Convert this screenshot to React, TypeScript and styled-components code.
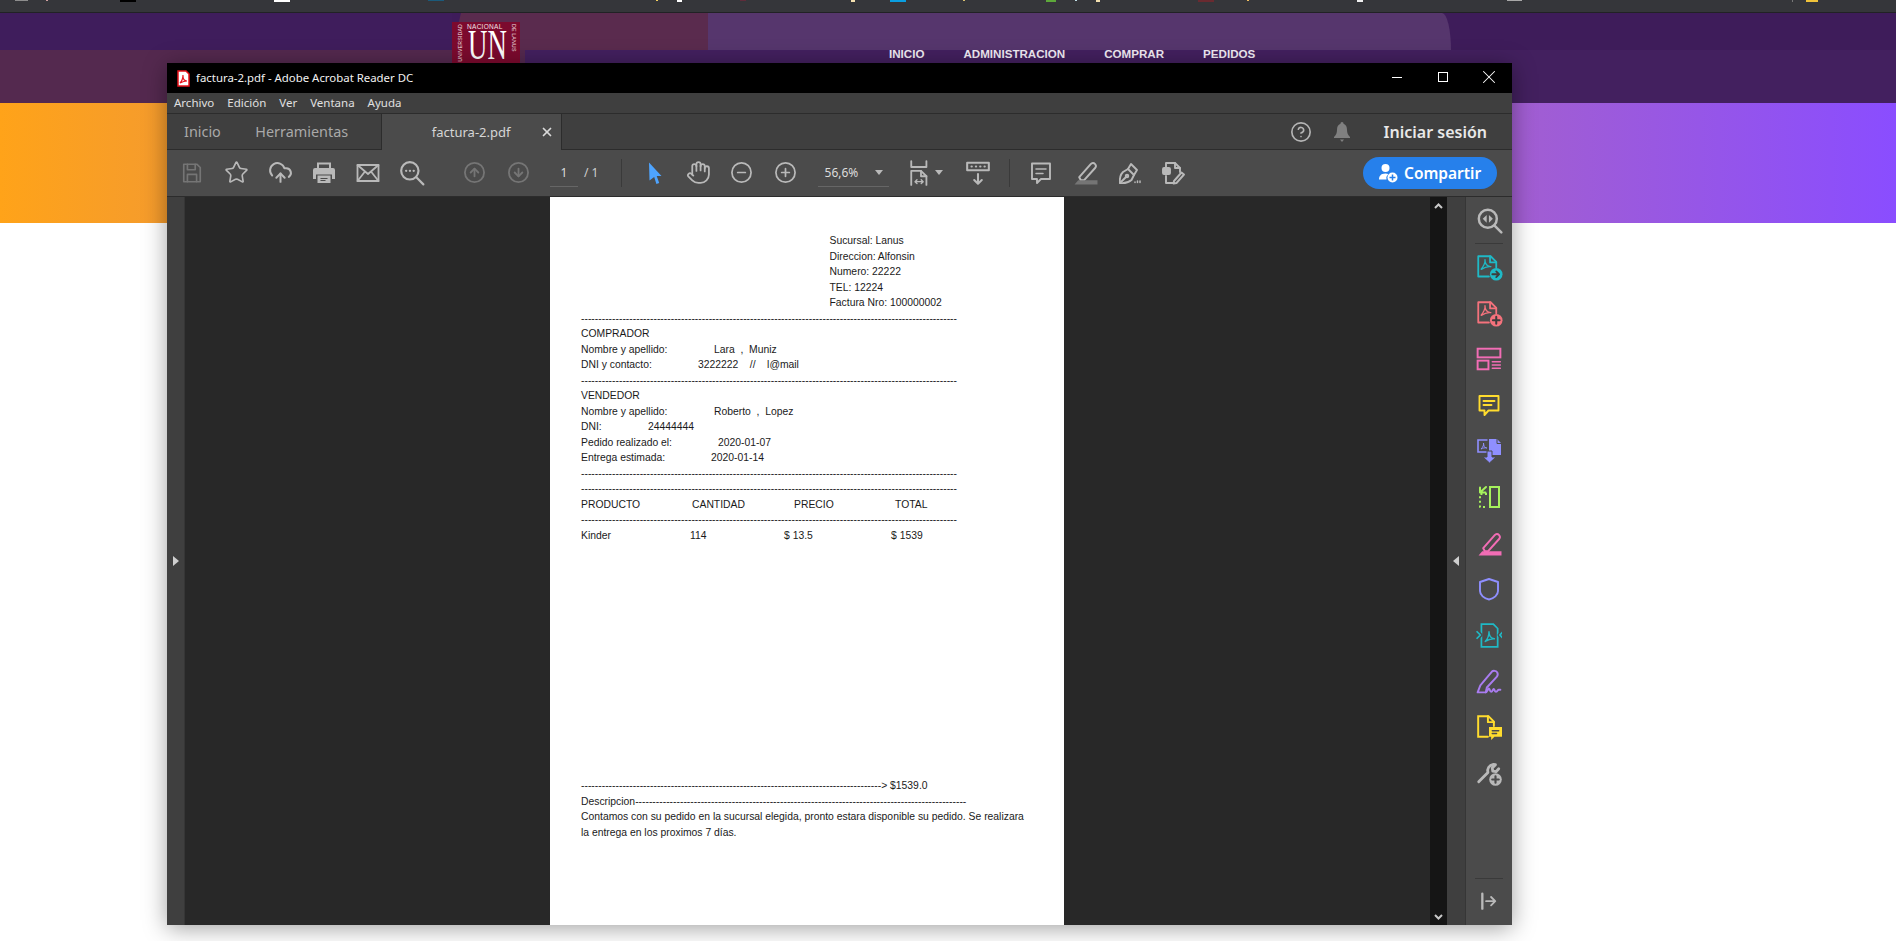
import React from 'react';
import styled, {createGlobalStyle} from 'styled-components';
import {Star, CloudUpload, CircleArrowUp, CircleArrowDown, Hand, CircleMinus, CirclePlus, CircleHelp, X} from 'lucide-react';

const UI_FONT = `'Noto Sans', 'Open Sans', sans-serif`;

const GlobalStyle = createGlobalStyle`
    html, body {
        margin: 0;
        height: 100%;
        overflow: hidden;
        background: #fff;
    }
    * {
        box-sizing: border-box;
    }
`;

const Desktop = styled.div`
    position: relative;
    width: 1896px;
    height: 941px;
    overflow: hidden;
    background: #fff;
`;

/* browser chrome, almost entirely cut off by the capture */
const BrowserStrip = styled.div`
    display: flex;
    align-items: flex-start;
    height: 13px;
    background: #35363a;
    border-bottom: 1px solid #212225;
`;

const Tick = styled.span<{$gap: number; $w: number; $h: number; $c: string}>`
    display: block;
    flex: none;
    margin-left: ${p => p.$gap}px;
    width: ${p => p.$w}px;
    height: ${p => p.$h}px;
    background: ${p => p.$c};
`;

const BandTop = styled.div`
    display: flex;
    height: 37px;
    background: #3e1c5a;
`;

const Segment = styled.div<{$w: number; $c: string}>`
    flex: none;
    width: ${p => p.$w}px;
    background: ${p => p.$c};
`;

const SlantSegment = styled(Segment)`
    clip-path: polygon(9px 0, 100% 0, 100% 100%, 0 100%);
`;

const CurvedSegment = styled(Segment)`
    border-top-right-radius: 9px 37px;
`;

const BandBottom = styled.div`
    display: flex;
    height: 53px;
    background: #43205f;
`;

const NavList = styled.nav`
    display: flex;
    gap: 39px;
    margin-top: -3px;
    padding: 0 0 0 364px;
    height: 12px;
    align-items: center;
`;

const NavLink = styled.span`
    font: bold 11.6px 'Liberation Sans', sans-serif;
    color: #f2ecf5;
`;

const Hero = styled.div`
    height: 120px;
    background: linear-gradient(90deg, #ffa319 0%, #8a4dff 100%);
`;

const Logo = styled.div`
    position: absolute;
    left: 452px;
    top: 22px;
    width: 68px;
    height: 41px;
    background: #7c0a2e;
    color: #f3e3e6;
`;

const LogoTop = styled.span`
    position: absolute;
    left: 15px;
    top: 1px;
    font: 6.5px/7px 'Liberation Sans', sans-serif;
    letter-spacing: 0.3px;
`;

const LogoSide = styled.span<{$left: number; $up?: boolean}>`
    position: absolute;
    left: ${p => p.$left}px;
    top: 2px;
    writing-mode: vertical-rl;
    font: 5.2px/8px 'Liberation Sans', sans-serif;
    letter-spacing: 0.2px;
    white-space: nowrap;
    transform: ${p => (p.$up ? 'rotate(180deg)' : 'none')};
`;

const LogoMark = styled.span`
    position: absolute;
    left: 16px;
    top: 9px;
    font: 42px/28px 'Liberation Serif', serif;
    transform: scaleX(0.64);
    transform-origin: left top;
    color: #fff;
`;

/* the reader window floats over the page */
const ReaderWindow = styled.div`
    position: absolute;
    left: 167px;
    top: 63px;
    width: 1345px;
    height: 862px;
    display: flex;
    flex-direction: column;
    overflow: hidden;
    font-family: ${UI_FONT};
    background: #3f3f3f;
    box-shadow: 0 3px 22px rgba(0, 0, 0, 0.38);
`;

const TitleBar = styled.div`
    display: flex;
    align-items: center;
    flex: none;
    height: 30px;
    padding-left: 10px;
    background: #000;
    color: #f2f2f2;
`;

const TitleText = styled.span`
    margin: -2px 0 0 6px;
    font-size: 11.4px;
`;

const WindowControls = styled.div`
    display: flex;
    margin-left: auto;
`;

const WindowButton = styled.div`
    display: flex;
    align-items: center;
    justify-content: center;
    width: 46px;
    height: 30px;
    padding-bottom: 2px;
    color: #fff;
`;

const MinimizeMark = styled.span`
    width: 10px;
    height: 1px;
    background: #fff;
`;

const MaximizeMark = styled.span`
    width: 10px;
    height: 10px;
    border: 1px solid #fff;
`;

const MenuBar = styled.div`
    display: flex;
    align-items: center;
    flex: none;
    gap: 13px;
    height: 21px;
    padding: 0 0 1px 7px;
    border-bottom: 1px solid #2c2c2c;
    font-size: 11.5px;
    color: #e0e0e0;
`;

const TabBar = styled.div`
    display: flex;
    align-items: stretch;
    flex: none;
    height: 36px;
    border-bottom: 1px solid #2c2c2c;
`;

const Tab = styled.div`
    display: flex;
    align-items: center;
    padding: 0 17.5px 0 17px;
    font-size: 14.4px;
    color: #a9a9a9;
`;

const ActiveTab = styled.div`
    position: relative;
    display: flex;
    align-items: center;
    justify-content: center;
    width: 181px;
    height: 36px;
    margin-left: 15px;
    background: #4b4b4b;
    border-left: 1px solid #2c2c2c;
    border-right: 1px solid #2c2c2c;
    font-size: 13px;
    color: #d6d6d6;
`;

const TabClose = styled.span`
    position: absolute;
    right: 7px;
    top: 11px;
    display: flex;
    color: #d9d9d9;
`;

const TabActions = styled.div`
    display: flex;
    align-items: center;
    margin-left: auto;
    padding-right: 25px;
    color: #b5b5b5;
`;

const BellSlot = styled.span`
    display: flex;
    margin-left: 22px;
    color: #808080;
`;

const SignIn = styled.span`
    margin-left: 34px;
    font-size: 16px;
    font-weight: 600;
    color: #e8e8e8;
`;

const Toolbar = styled.div`
    display: flex;
    align-items: center;
    flex: none;
    height: 47px;
    padding: 0 15px 1px 3px;
    background: #4b4b4b;
    border-bottom: 1px solid #2c2c2c;
`;

const ToolButton = styled.div<{$tone?: string; $left?: number; $w?: number}>`
    display: flex;
    align-items: center;
    justify-content: center;
    flex: none;
    width: ${p => p.$w ?? 44}px;
    height: 32px;
    margin-left: ${p => p.$left ?? 0}px;
    color: ${p => p.$tone ?? '#b9b9b9'};
`;

const ToolDivider = styled.div<{$left: number}>`
    flex: none;
    width: 1px;
    height: 28px;
    margin-left: ${p => p.$left}px;
    background: #3a3a3a;
`;

const Underlined = styled.div<{$left: number; $w: number}>`
    display: flex;
    align-items: center;
    justify-content: center;
    flex: none;
    width: ${p => p.$w}px;
    height: 28px;
    margin-left: ${p => p.$left}px;
    border-bottom: 1px solid #666;
    font-size: 12px;
    color: #dcdcdc;
`;

const PageTotal = styled.span`
    margin-left: 6px;
    font-size: 12px;
    color: #cfcfcf;
`;

const Caret = styled.span<{$left: number}>`
    flex: none;
    margin-left: ${p => p.$left}px;
    width: 0;
    height: 0;
    border-style: solid;
    border-width: 5px 4px 0 4px;
    border-color: #b9b9b9 transparent transparent transparent;
`;

const ShareButton = styled.div`
    display: flex;
    align-items: center;
    margin-left: auto;
    width: 134px;
    height: 32px;
    padding-left: 15px;
    gap: 6px;
    border-radius: 16px;
    background: #2680eb;
    font-size: 15.5px;
    font-weight: 600;
    color: #fff;
`;

const Workspace = styled.div`
    display: flex;
    flex: 1;
    min-height: 0;
`;

const Gutter = styled.div<{$w: number}>`
    display: flex;
    align-items: center;
    justify-content: center;
    flex: none;
    width: ${p => p.$w}px;
    background: #3f3f3f;
    border-right: 1px solid #363636;
`;

const GutterArrow = styled.span<{$dir: 'left' | 'right'}>`
    width: 0;
    height: 0;
    border-style: solid;
    border-width: ${p => (p.$dir === 'right' ? '5px 0 5px 6px' : '5px 6px 5px 0')};
    border-color: ${p =>
        p.$dir === 'right'
            ? 'transparent transparent transparent #cfcfcf'
            : 'transparent #cfcfcf transparent transparent'};
`;

const DocArea = styled.div`
    flex: 1;
    min-width: 0;
    padding-left: 365px;
    background: #282828;
    overflow: hidden;
`;

const Page = styled.div`
    width: 514px;
    height: 100%;
    padding: 36px 0 0 31px;
    background: #fff;
    font: 10.37px/15.5px 'Liberation Sans', Arial, sans-serif;
    color: #1a1a1a;
    white-space: pre;
`;

const BranchBlock = styled.div`
    padding-left: 248.5px;
`;

const Line = styled.div`
    display: flex;
    height: 15.5px;
`;

const Cell = styled.span<{$w: number}>`
    flex: none;
    width: ${p => p.$w}px;
`;

const PageFooter = styled.div`
    margin-top: 235px;
`;

const Description = styled.div`
    width: 451px;
    white-space: normal;
`;

const Scrollbar = styled.div`
    display: flex;
    flex-direction: column;
    align-items: center;
    justify-content: space-between;
    flex: none;
    width: 17px;
    padding: 6px 0 5px;
    background: #151515;
    color: #c8c8c8;
`;

const ToolRail = styled.div`
    display: flex;
    flex-direction: column;
    align-items: center;
    flex: none;
    width: 46px;
    background: #4b4b4b;
`;

const RailButton = styled.div<{$tone: string}>`
    display: flex;
    align-items: center;
    justify-content: center;
    flex: none;
    width: 46px;
    height: 46px;
    color: ${p => p.$tone};
`;

const RailRule = styled.div`
    flex: none;
    width: 28px;
    height: 1px;
    background: #3a3a3a;
`;

const RailSpacer = styled.div`
    flex: 1;
`;

type IconProps = {children: React.ReactNode; size?: number; stroke?: number};

const Glyph = ({children, size = 24, stroke = 2}: IconProps) => (
    <svg
        width={size}
        height={size}
        viewBox="0 0 24 24"
        fill="none"
        stroke="currentColor"
        strokeWidth={stroke}
        strokeLinejoin="round"
        strokeLinecap="round"
    >
        {children}
    </svg>
);

const PDF_MARK = 'M7 16c2-2 4-6 3.5-8.5M10.5 7.5c0 4 2 6 5 6.5M7 16.5c3-2 6-3 9-2.5';

const PdfFileIcon = () => (
    <svg width="13" height="17" viewBox="0 0 13 17">
        <path d="M1 1h8l3 3v12H1z" fill="#fff" stroke="#e8141c" strokeWidth="1.5" />
        <path d="M3 13c2-2 3-5 3-8M6 6c0 3 1 5 4 5M3 13c2-1 5-2 7-2" fill="none" stroke="#e8141c" strokeWidth="1.2" />
    </svg>
);

const SaveIcon = () => (
    <Glyph size={22} stroke={1.8}>
        <path d="M3 2.5h14.5L21 6v15.5H3z" />
        <path d="M7 2.5v6h8.5v-6M7 21.5v-8h10v8" />
    </Glyph>
);

const PrinterIcon = () => (
    <svg width="24" height="24" viewBox="0 0 24 24">
        <path d="M6 7V2.5h12V7" fill="none" stroke="currentColor" strokeWidth="2" />
        <path d="M3 7h18a2 2 0 0 1 2 2v9h-3v-4.5H4V18H1V9a2 2 0 0 1 2-2z" fill="currentColor" />
        <rect x="5.5" y="14.5" width="13" height="7.5" fill="currentColor" />
        <path d="M8.5 17.5h7M8.5 19.5h5" stroke="#4b4b4b" strokeWidth="1.2" />
    </svg>
);

const MailIcon = () => (
    <Glyph size={24} stroke={1.8}>
        <rect x="1.5" y="4" width="21" height="16" />
        <path d="M1.5 4 12 13 22.5 4M1.5 20 9 10.5M22.5 20 15 10.5" />
    </Glyph>
);

const SearchDotsIcon = () => (
    <Glyph size={26} stroke={2}>
        <circle cx="10" cy="10" r="8" />
        <path d="m16 16 6.5 6.5" />
        <path d="M6.5 10h.2M10 10h.2M13.5 10h.2" />
    </Glyph>
);

const PointerIcon = () => (
    <svg width="20" height="24" viewBox="0 0 20 24">
        <path d="M4 1.5 16.5 15h-4.8l2.5 7-2.8 1-2.2-7-4.700 3.500z" fill="#4ea4ff" />
    </svg>
);

const FitPageIcon = () => (
    <Glyph size={26} stroke={1.7}>
        <path d="M3 1v5.5h14V1" />
        <path d="M3 23V10h9l5 5v8" />
        <path d="M12 10v5h5" />
        <path d="M6.5 20H14M6.5 20l1.8-1.8M6.5 20l1.8 1.8M14 20l-1.8-1.8M14 20l-1.8 1.8" strokeWidth="1.3" />
    </Glyph>
);

const MeasureIcon = () => (
    <Glyph size={26} stroke={1.9}>
        <rect x="2" y="2.5" width="20" height="7" />
        <path d="M6 6h.3M10 6h.3M14 6h.3M18 6h.3" />
        <path d="M12 13v9M8.5 18.5 12 22l3.5-3.5" />
    </Glyph>
);

const CommentIcon = () => (
    <Glyph size={24} stroke={1.9}>
        <path d="M3 2.5h18V18h-9l-4 4v-4H3z" />
        <path d="M7 8h10M7 12.5h7" strokeWidth="1.5" />
    </Glyph>
);

const HighlightIcon = ({tone = '#757575'}: {tone?: string}) => (
    <Glyph size={25} stroke={1.9}>
        <path d="M6 16.5 17 4c1.2-1.3 3-1.3 4-.3s1.3 2.7.2 4L10.5 19.5h-3z" />
        <path d="M1.5 23.5 5 19.5h18.5v4z" fill={tone} stroke="none" />
    </Glyph>
);

const PenNibIcon = () => (
    <Glyph size={24} stroke={1.9}>
        <path d="M3 22c-.5-4 0-8 3-11l5-3 6 6-2.5 5c-3 2.5-7.5 3.5-11.5 3z" />
        <path d="m11 8 3-5 6 6-3 5M3 22l6-6" />
        <circle cx="10" cy="15" r="1.3" />
        <path d="M18 21v.5M20.5 20v1.5M23 20v1.5" strokeWidth="1.5" />
    </Glyph>
);

const EditDocIcon = () => (
    <Glyph size={24} stroke={1.9}>
        <path d="M5 7V2h9l5 5v4" />
        <path d="M14 2v5h5" />
        <rect x="2" y="7" width="7" height="6" rx="1" fill="currentColor" />
        <path d="M5 15v7h7" />
        <path d="m13 20 7.5-8.5 2.500 2L15.5 22l-3 .5z" />
    </Glyph>
);

const BellIcon = () => (
    <svg width="16" height="20" viewBox="0 0 16 20">
        <path d="M8 0c1 0 1.5.8 1.5 1.8C12 2.6 13 5 13 8c0 3 1 5 3 7v1H0v-1c2-2 3-4 3-7 0-3 1-5.4 3.5-6.2C6.5.8 7 0 8 0z" fill="currentColor" />
        <path d="M6 17.5h4L8 20z" fill="currentColor" />
    </svg>
);

const ShareUserIcon = () => (
    <svg width="20" height="20" viewBox="0 0 20 20" fill="#fff">
        <circle cx="7.5" cy="5" r="4" />
        <path d="M1 16.5c0-3 1.5-6 6.5-6 1 0 2 .2 2.8.5a6 6 0 0 0-1.8 5.5z" />
        <circle cx="14.5" cy="14.5" r="5" />
        <path d="M14.5 11.5v6M11.5 14.5h6" stroke="#2680eb" strokeWidth="1.5" />
    </svg>
);

const SearchCodeIcon = () => (
    <Glyph size={27} stroke={2.2}>
        <circle cx="10.5" cy="10.5" r="8" />
        <path d="m16.5 16.5 6 6" />
        <path d="M9.5 7v7L6 10.5zM11.5 7v7l3.5-3.5z" fill="currentColor" stroke="none" />
    </Glyph>
);

const PdfBadgeIcon = ({kind}: {kind: 'export' | 'create'}) => (
    <Glyph size={27} stroke={1.6}>
        <path d="M11.5 20H2V2h11l5 5v5" />
        <path d="M12.5 2v5.5H18" />
        <path d={PDF_MARK} transform="translate(-2 -2) scale(.95)" strokeWidth="1.2" />
        <circle cx="18" cy="18" r="5.6" fill="currentColor" stroke="none" />
        {kind === 'export' ? (
            <path d="M14.5 18h6M18 15.5l2.5 2.5-2.5 2.5" stroke="#3c3c3c" />
        ) : (
            <path d="M15 18h6M18 15v6" stroke="#3c3c3c" strokeWidth="1.8" />
        )}
    </Glyph>
);

const LayoutIcon = () => (
    <Glyph size={26} stroke={1.8}>
        <rect x="1.5" y="2.5" width="21" height="8" strokeLinejoin="miter" />
        <rect x="1.5" y="13.5" width="10" height="8" strokeLinejoin="miter" />
        <path d="M15 14.5h7.5M15 17.5h7.5M15 20.5h7.5" strokeWidth="1.3" />
    </Glyph>
);

const BubbleIcon = () => (
    <Glyph size={24} stroke={1.9}>
        <path d="M2.5 3h19v14.5h-10L7.5 22v-4.500h-5z" />
        <path d="M6.5 8h11M6.5 12h8" />
    </Glyph>
);

const CombineIcon = () => (
    <svg width="26" height="26" viewBox="0 0 26 26" fill="none" stroke="currentColor" strokeWidth="1.6">
        <path d="M11 14H2V2h9.5" />
        <path d="M5 11c2-2 3-4 2.5-6M7.5 5c0 3 1 4.5 3 5M5 11c2-1 3.5-1.5 6-1" strokeWidth="1" />
        <path d="M13 1h8l4 4v12H13z" fill="currentColor" stroke="none" />
        <path d="M21 .5v5h4.5" stroke="#4b4b4b" strokeWidth="1" />
        <path d="M11 13h5v6h4l-6.5 6L7 19h4z" fill="currentColor" stroke="#4b4b4b" strokeWidth="1" />
    </svg>
);

const OrganizeIcon = () => (
    <Glyph size={24} stroke={2}>
        <rect x="13" y="2" width="9" height="20" strokeLinejoin="miter" />
        <path d="M10 9H3v13h7" strokeDasharray="2 2.6" strokeLinecap="butt" />
        <path d="M9 2 3.5 7M3 2.5v5h5.5" />
    </Glyph>
);

const ShieldIcon = () => (
    <Glyph size={24} stroke={1.9}>
        <path d="M12 2 21 5v9c0 4-4 7.5-9 8.5-5-1-9-4.5-9-8.5V5z" />
    </Glyph>
);

const CompressIcon = () => (
    <Glyph size={26} stroke={1.6}>
        <path d="M5 2h11l4 4v17H5z" strokeLinejoin="miter" />
        <path d="M8.5 18c2-2 3.5-5 3.5-9M12 9c0 4 1.5 6 5 6.5M8.5 18c3-2 5-3 8.5-2.5" strokeWidth="1.3" />
        <path d="M1 9l3 3-3 3M25 9l-3 3 3 3" stroke="#4b4b4b" strokeWidth="4" />
        <path d="M1 9l3 3-3 3M25 9l-3 3 3 3" />
    </Glyph>
);

const SignIcon = () => (
    <Glyph size={26} stroke={1.8}>
        <path d="M1.5 22.5 4 16 14.5 3.5c1.5-1.5 4-1 5 .5s.6 2.8-.2 4L10 18l-1 4.5z" />
        <path d="M9 22.5c1.5 0 2-4 3-3.5s.5 3 2 3 1.5-3 2.5-2.5.5 2.5 2 2.5 1.5-2 2.5-2h1.5" />
    </Glyph>
);

const DocCommentIcon = () => (
    <Glyph size={26} stroke={1.8}>
        <path d="M11 21H2V2h9.5l5 5v4" strokeLinejoin="miter" />
        <path d="M11 2v5.5h5.5" />
        <path d="M12 12h12v9h-7l-3 3v-3h-2z" fill="currentColor" stroke="none" />
        <path d="M15 15.5h6M15 18h4" stroke="#4b4b4b" strokeWidth="1.3" />
    </Glyph>
);

const WrenchPlusIcon = () => (
    <Glyph size={26} stroke={2.6}>
        <path d="M2.5 20 11 11.5c-1-3 1-7 5-7.5l2 .3-3 3 .5 3 3 .5 2.5-2.7" />
        <circle cx="18" cy="18" r="5.8" fill="currentColor" stroke="none" />
        <path d="M15 18h6M18 15v6" stroke="#4b4b4b" strokeWidth="2" />
    </Glyph>
);

const CollapseIcon = () => (
    <Glyph size={20} stroke={2.2}>
        <path d="M4 2v18" strokeWidth="2.8" />
        <path d="M8.5 11H19M14.5 6l5 5-5 5" />
    </Glyph>
);

const ChevronUp = () => (
    <svg width="9" height="6" viewBox="0 0 9 6" fill="none" stroke="currentColor" strokeWidth="2">
        <path d="m1 5 3.5-3.5L8 5" />
    </svg>
);

const ChevronDown = () => (
    <svg width="9" height="6" viewBox="0 0 9 6" fill="none" stroke="currentColor" strokeWidth="2">
        <path d="m1 1 3.5 3.5L8 1" />
    </svg>
);

// gap from the previous mark, width, height, colour
const STRIP_MARKS: [number, number, number, string][] = [
    [15, 13, 1, '#8d8d8d'],
    [18, 2, 1, '#d0a0a0'],
    [72, 16, 2, '#000'],
    [138, 16, 2, '#fff'],
    [138, 16, 1, '#1b5a7a'],
    [212, 2, 1, '#f2d060'],
    [19, 5, 2, '#fff'],
    [58, 6, 1, '#5f2c3a'],
    [105, 4, 2, '#f4e0b0'],
    [35, 16, 2, '#0a9ee0'],
    [57, 2, 1, '#d8c070'],
    [81, 10, 2, '#5da83a'],
    [19, 2, 1, '#c0e0e8'],
    [19, 4, 2, '#f4e0b0'],
    [98, 16, 2, '#6a2a30'],
    [33, 2, 1, '#f2c060'],
    [108, 6, 2, '#f0f0f0'],
    [144, 15, 1, '#a8a8a8'],
    [270, 1, 2, '#777'],
    [13, 12, 2, '#efc23a']
];

const RIGHT_TOOLS: [string, React.ReactNode][] = [
    ['#1fb9c6', <PdfBadgeIcon key="a" kind="export" />],
    ['#f4727c', <PdfBadgeIcon key="b" kind="create" />],
    ['#f26db5', <LayoutIcon key="c" />],
    ['#ffdc2e', <BubbleIcon key="d" />],
    ['#8f8fff', <CombineIcon key="e" />],
    ['#a6f25c', <OrganizeIcon key="f" />],
    ['#f26db5', <HighlightIcon key="g" tone="#f26db5" />],
    ['#8f8fff', <ShieldIcon key="h" />],
    ['#1fb9c6', <CompressIcon key="i" />],
    ['#a97cf0', <SignIcon key="j" />],
    ['#ffdc2e', <DocCommentIcon key="k" />],
    ['#b9b9b9', <WrenchPlusIcon key="l" />]
];

const DASHES = '-'.repeat(109);

const App = (): JSX.Element => {
    return (
        <Desktop>
            <GlobalStyle />
            <BrowserStrip>
                {STRIP_MARKS.map(([gap, w, h, c], i) => (
                    <Tick key={i} $gap={gap} $w={w} $h={h} $c={c} />
                ))}
            </BrowserStrip>
            <BandTop>
                <Segment $w={452} $c="#3f1d5c" />
                <SlantSegment $w={256} $c="#5a2b4e" />
                <CurvedSegment $w={743} $c="#56366d" />
            </BandTop>
            <BandBottom>
                <Segment $w={525} $c="#54294f" />
                <NavList>
                    <NavLink>INICIO</NavLink>
                    <NavLink>ADMINISTRACION</NavLink>
                    <NavLink>COMPRAR</NavLink>
                    <NavLink>PEDIDOS</NavLink>
                </NavList>
            </BandBottom>
            <Hero />
            <Logo>
                <LogoTop>NACIONAL</LogoTop>
                <LogoSide $left={4} $up>UNIVERSIDAD</LogoSide>
                <LogoSide $left={58}>DE LANUS</LogoSide>
                <LogoMark>UN</LogoMark>
            </Logo>

            <ReaderWindow>
                <TitleBar>
                    <PdfFileIcon />
                    <TitleText>factura-2.pdf - Adobe Acrobat Reader DC</TitleText>
                    <WindowControls>
                        <WindowButton>
                            <MinimizeMark />
                        </WindowButton>
                        <WindowButton>
                            <MaximizeMark />
                        </WindowButton>
                        <WindowButton>
                            <X size={22} strokeWidth={1.1} />
                        </WindowButton>
                    </WindowControls>
                </TitleBar>
                <MenuBar>
                    <span>Archivo</span>
                    <span>Edición</span>
                    <span>Ver</span>
                    <span>Ventana</span>
                    <span>Ayuda</span>
                </MenuBar>
                <TabBar>
                    <Tab>Inicio</Tab>
                    <Tab>Herramientas</Tab>
                    <ActiveTab>
                        factura-2.pdf
                        <TabClose>
                            <X size={14} strokeWidth={3} />
                        </TabClose>
                    </ActiveTab>
                    <TabActions>
                        <CircleHelp size={22} strokeWidth={1.8} />
                        <BellSlot>
                            <BellIcon />
                        </BellSlot>
                        <SignIn>Iniciar sesión</SignIn>
                    </TabActions>
                </TabBar>
                <Toolbar>
                    <ToolButton $tone="#757575"><SaveIcon /></ToolButton>
                    <ToolButton><Star size={25} strokeWidth={1.6} /></ToolButton>
                    <ToolButton><CloudUpload size={25} strokeWidth={1.9} /></ToolButton>
                    <ToolButton><PrinterIcon /></ToolButton>
                    <ToolButton><MailIcon /></ToolButton>
                    <ToolButton><SearchDotsIcon /></ToolButton>
                    <ToolButton $tone="#757575" $left={18}><CircleArrowUp size={23} strokeWidth={1.9} /></ToolButton>
                    <ToolButton $tone="#757575"><CircleArrowDown size={23} strokeWidth={1.9} /></ToolButton>
                    <Underlined $left={10} $w={28}>1</Underlined>
                    <PageTotal>/ 1</PageTotal>
                    <ToolDivider $left={23} />
                    <ToolButton $left={11}><PointerIcon /></ToolButton>
                    <ToolButton $left={-1}><Hand size={25} strokeWidth={1.7} /></ToolButton>
                    <ToolButton $left={-1}><CircleMinus size={23} strokeWidth={1.8} /></ToolButton>
                    <ToolButton><CirclePlus size={23} strokeWidth={1.8} /></ToolButton>
                    <Underlined $left={11} $w={71}>
                        56,6%
                        <Caret $left={17} />
                    </Underlined>
                    <ToolButton $left={10} $w={44}><FitPageIcon /></ToolButton>
                    <Caret $left={-8} />
                    <ToolButton $left={13}><MeasureIcon /></ToolButton>
                    <ToolDivider $left={9} />
                    <ToolButton $left={9}><CommentIcon /></ToolButton>
                    <ToolButton><HighlightIcon /></ToolButton>
                    <ToolButton><PenNibIcon /></ToolButton>
                    <ToolButton><EditDocIcon /></ToolButton>
                    <ShareButton>
                        <ShareUserIcon />
                        Compartir
                    </ShareButton>
                </Toolbar>
                <Workspace>
                    <Gutter $w={18}>
                        <GutterArrow $dir="right" />
                    </Gutter>
                    <DocArea>
                        <Page>
                            <BranchBlock>
                                <Line>Sucursal: Lanus</Line>
                                <Line>Direccion: Alfonsin</Line>
                                <Line>Numero: 22222</Line>
                                <Line>TEL: 12224</Line>
                                <Line>Factura Nro: 100000002</Line>
                            </BranchBlock>
                            <Line>{DASHES}</Line>
                            <Line>COMPRADOR</Line>
                            <Line><Cell $w={133}>Nombre y apellido:</Cell>Lara  ,  Muniz</Line>
                            <Line><Cell $w={117}>DNI y contacto:</Cell>3222222    //    l@mail</Line>
                            <Line>{DASHES}</Line>
                            <Line>VENDEDOR</Line>
                            <Line><Cell $w={133}>Nombre y apellido:</Cell>Roberto  ,  Lopez</Line>
                            <Line><Cell $w={67}>DNI:</Cell>24444444</Line>
                            <Line><Cell $w={137}>Pedido realizado el:</Cell>2020-01-07</Line>
                            <Line><Cell $w={130}>Entrega estimada:</Cell>2020-01-14</Line>
                            <Line>{DASHES}</Line>
                            <Line>{DASHES}</Line>
                            <Line>
                                <Cell $w={111}>PRODUCTO</Cell>
                                <Cell $w={102}>CANTIDAD</Cell>
                                <Cell $w={101}>PRECIO</Cell>
                                TOTAL
                            </Line>
                            <Line>{DASHES}</Line>
                            <Line>
                                <Cell $w={109}>Kinder</Cell>
                                <Cell $w={94}>114</Cell>
                                <Cell $w={107}>$ 13.5</Cell>
                                $ 1539
                            </Line>
                            <PageFooter>
                                <Line>{'-'.repeat(87)}{'> $1539.0'}</Line>
                                <Line>Descripcion{'-'.repeat(96)}</Line>
                                <Description>
                                    Contamos con su pedido en la sucursal elegida, pronto estara disponible su pedido. Se realizara la entrega en los proximos 7 días.
                                </Description>
                            </PageFooter>
                        </Page>
                    </DocArea>
                    <Scrollbar>
                        <ChevronUp />
                        <ChevronDown />
                    </Scrollbar>
                    <Gutter $w={19}>
                        <GutterArrow $dir="left" />
                    </Gutter>
                    <ToolRail>
                        <RailButton $tone="#b9b9b9"><SearchCodeIcon /></RailButton>
                        <RailRule />
                        {RIGHT_TOOLS.map(([tone, icon], i) => (
                            <RailButton key={i} $tone={tone}>{icon}</RailButton>
                        ))}
                        <RailSpacer />
                        <RailRule />
                        <RailButton $tone="#b9b9b9"><CollapseIcon /></RailButton>
                    </ToolRail>
                </Workspace>
            </ReaderWindow>
        </Desktop>
    );
};

export default App;
